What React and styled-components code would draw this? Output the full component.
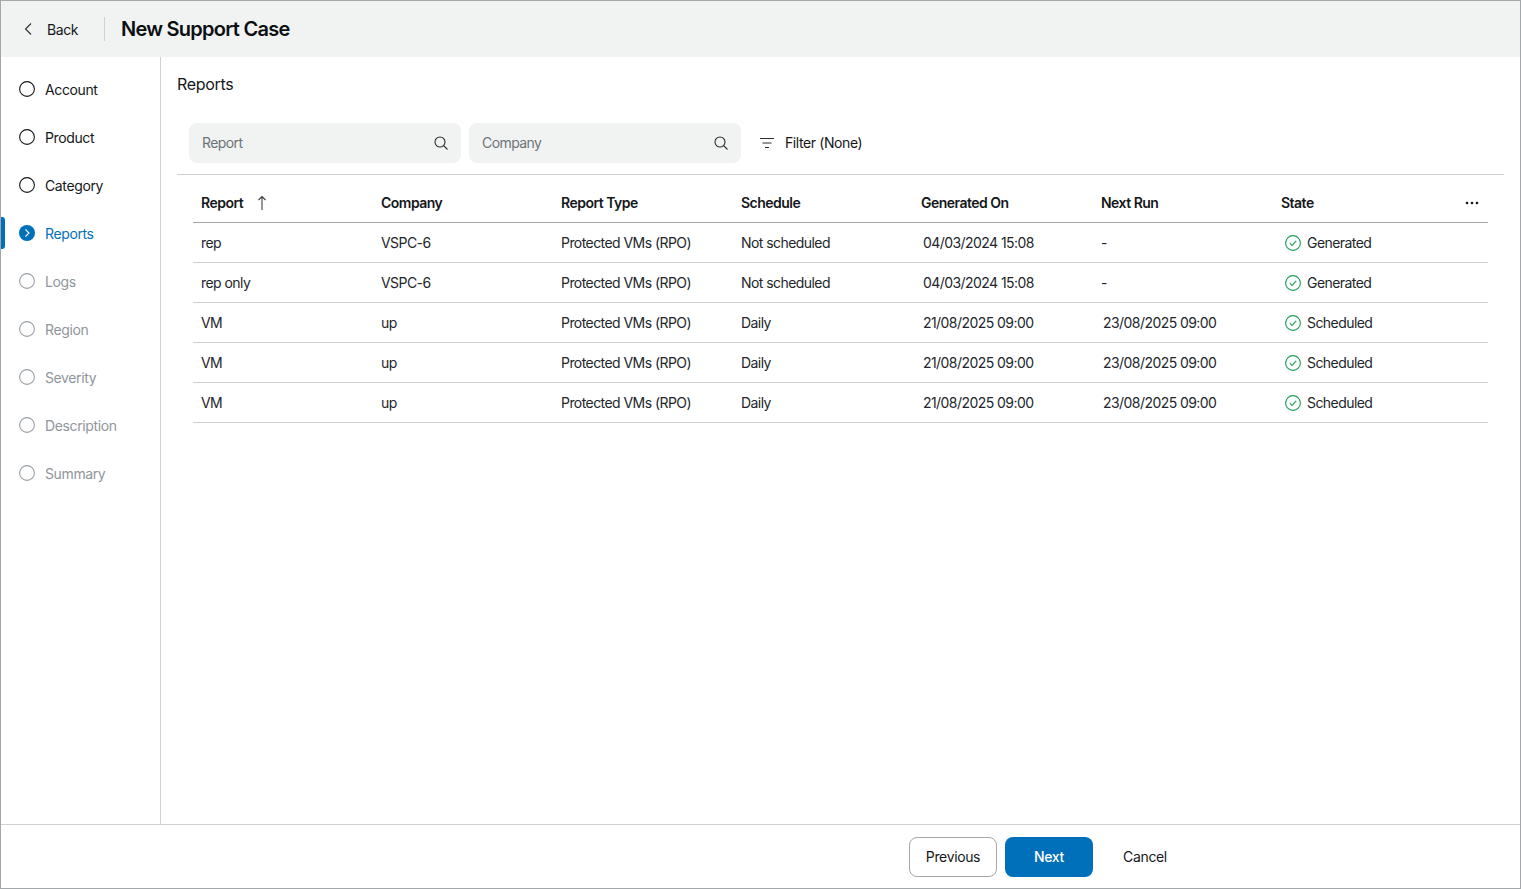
import React from "react";
import styled, { createGlobalStyle } from "styled-components";

const steps = [
  { label: "Account", state: "done" },
  { label: "Product", state: "done" },
  { label: "Category", state: "done" },
  { label: "Reports", state: "active" },
  { label: "Logs", state: "todo" },
  { label: "Region", state: "todo" },
  { label: "Severity", state: "todo" },
  { label: "Description", state: "todo" },
  { label: "Summary", state: "todo" },
];

const columns = ["Report", "Company", "Report Type", "Schedule", "Generated On", "Next Run", "State"];

const rows = [
  ["rep", "VSPC-6", "Protected VMs (RPO)", "Not scheduled", "04/03/2024 15:08", "-", "Generated"],
  ["rep only", "VSPC-6", "Protected VMs (RPO)", "Not scheduled", "04/03/2024 15:08", "-", "Generated"],
  ["VM", "up", "Protected VMs (RPO)", "Daily", "21/08/2025 09:00", "23/08/2025 09:00", "Scheduled"],
  ["VM", "up", "Protected VMs (RPO)", "Daily", "21/08/2025 09:00", "23/08/2025 09:00", "Scheduled"],
  ["VM", "up", "Protected VMs (RPO)", "Daily", "21/08/2025 09:00", "23/08/2025 09:00", "Scheduled"],
];

const SearchIcon = () => (
  <svg width="16" height="16" viewBox="0 0 16 16" fill="none" stroke="#2b2f33" strokeWidth="1.1">
    <circle cx="7" cy="7" r="5" />
    <path d="M10.7 10.7 14.5 14.5" />
  </svg>
);

function StepIcon({ state }) {
  if (state === "active") {
    return (
      <svg width="16" height="16" viewBox="0 0 16 16">
        <circle cx="8" cy="8" r="8" fill="#0070bb" />
        <path d="M6.500 4.500 10 8l-3.500 3.500" fill="none" stroke="#fff" strokeWidth="1.1" />
      </svg>
    );
  }
  return (
    <svg width="16" height="16" viewBox="0 0 16 16">
      <circle cx="8" cy="8" r="7.4" fill="none" stroke={state === "done" ? "#14171a" : "#9aa1a6"} strokeWidth="1.1" />
    </svg>
  );
}

function App() {
  return (
    <>
      <GlobalStyle />
      <Frame>
        <Header>
          <BackButton>
            <svg width="16" height="16" viewBox="0 0 16 16" fill="none" stroke="#2b2f33" strokeWidth="1.1">
              <path d="M11 2.500 5.500 8l5.500 5.500" />
            </svg>
            <span>Back</span>
          </BackButton>
          <Title>New Support Case</Title>
        </Header>
        <Body>
          <Sidebar>
            {steps.map((step) => (
              <Step key={step.label} $state={step.state}>
                <StepIcon state={step.state} />
                <span>{step.label}</span>
              </Step>
            ))}
          </Sidebar>
          <Content>
            <Heading>Reports</Heading>
            <Toolbar>
              <SearchBox>
                <span>Report</span>
                <SearchIcon />
              </SearchBox>
              <SearchBox>
                <span>Company</span>
                <SearchIcon />
              </SearchBox>
              <FilterButton>
                <svg width="16" height="16" viewBox="0 0 16 16" fill="none" stroke="#2b2f33" strokeWidth="1.1">
                  <path d="M1 3.500h14M3.500 8h9M6 12.500h4" />
                </svg>
                <span>Filter (None)</span>
              </FilterButton>
            </Toolbar>
            <Table>
              <thead>
                <tr>
                  {columns.map((col) => (
                    <HeadCell key={col}>
                      <HeadInner>
                        <span>{col}</span>
                        {col === "Report" && (
                          <SortArrow width="12" height="16" viewBox="0 0 12 16" fill="none" stroke="#3a3f44" strokeWidth="1.1">
                            <path d="M6 15V1.500M2.500 5 6 1.500 9.500 5" />
                          </SortArrow>
                        )}
                        {col === "State" && (
                          <MoreDots viewBox="0 0 14 4" width="14" height="4" fill="#14171a">
                            <circle cx="2" cy="2" r="1.300" />
                            <circle cx="7" cy="2" r="1.300" />
                            <circle cx="12" cy="2" r="1.300" />
                          </MoreDots>
                        )}
                      </HeadInner>
                    </HeadCell>
                  ))}
                </tr>
              </thead>
              <tbody>
                {rows.map((row, i) => (
                  <tr key={i}>
                    <Cell>{row[0]}</Cell>
                    <Cell>{row[1]}</Cell>
                    <Cell>{row[2]}</Cell>
                    <Cell>{row[3]}</Cell>
                    <Cell $inset>{row[4]}</Cell>
                    <Cell $inset={row[5] !== "-"}>{row[5]}</Cell>
                    <Cell $inset>
                      <StateLabel>
                        <CheckIcon width="16" height="16" viewBox="0 0 16 16" fill="none" stroke="#1a9e55" strokeWidth="1.1">
                          <circle cx="8" cy="8" r="7.4" />
                          <path d="M4.800 8.200 7.100 10.500 11.200 5.800" />
                        </CheckIcon>
                        <span>{row[6]}</span>
                      </StateLabel>
                    </Cell>
                  </tr>
                ))}
              </tbody>
            </Table>
          </Content>
        </Body>
        <Footer>
          <OutlineButton>Previous</OutlineButton>
          <PrimaryButton>Next</PrimaryButton>
          <TextButton>Cancel</TextButton>
        </Footer>
      </Frame>
    </>
  );
}

const GlobalStyle = createGlobalStyle`
  html, body {
    margin: 0;
    padding: 0;
    background: #fff;
  }
  body {
    font-family: Inter, "Liberation Sans", sans-serif;
    font-size: 14px;
    color: #14171a;
  }
  * {
    box-sizing: border-box;
  }
`;

const Frame = styled.div`
  width: 1521px;
  height: 889px;
  border: 1px solid #a3a7aa;
  display: flex;
  flex-direction: column;
  overflow: hidden;
`;

const Header = styled.header`
  height: 56px;
  flex: none;
  background: #f1f3f3;
  display: flex;
  align-items: center;
  padding-left: 19px;
`;

const BackButton = styled.div`
  width: 85px;
  height: 24px;
  display: flex;
  align-items: center;
  gap: 11px;
  border-right: 1px solid #cfd2d4;
  letter-spacing: -0.4px;
`;

const Title = styled.h1`
  margin: 0 0 0 16px;
  font-size: 20px;
  font-weight: 600;
  letter-spacing: -0.74px;
  color: #0c0f12;
`;

const Body = styled.div`
  flex: 1;
  display: flex;
  min-height: 0;
`;

const Sidebar = styled.nav`
  width: 160px;
  flex: none;
  padding-top: 8px;
  border-right: 1px solid #cfd2d4;
`;

const Step = styled.div`
  position: relative;
  height: 48px;
  display: flex;
  align-items: center;
  gap: 10px;
  padding-left: 18px;
  letter-spacing: -0.38px;
  color: ${(p) => (p.$state === "active" ? "#0070bb" : p.$state === "todo" ? "#8f969b" : "#14171a")};

  ${(p) =>
    p.$state === "active" &&
    `
    &::before {
      content: "";
      position: absolute;
      left: 0;
      top: 8px;
      width: 4px;
      height: 32px;
      background: #0070bb;
      border-radius: 0 3px 3px 0;
    }
  `}
`;

const Content = styled.main`
  flex: 1;
  min-width: 0;
  padding: 15px 16px 0;
`;

const Heading = styled.h2`
  margin: 0;
  height: 24px;
  line-height: 24px;
  font-size: 16px;
  font-weight: 400;
  letter-spacing: -0.3px;
`;

const Toolbar = styled.div`
  margin-top: 27px;
  height: 52px;
  padding: 0 0 12px 12px;
  display: flex;
  gap: 8px;
  border-bottom: 1px solid #cfd2d4;
`;

const SearchBox = styled.div`
  width: 272px;
  height: 40px;
  padding: 0 12px 0 13px;
  background: #f1f3f3;
  border-radius: 8px;
  display: flex;
  align-items: center;
  justify-content: space-between;
  color: #6c7378;
  letter-spacing: -0.58px;

  span {
    padding-bottom: 2px;
  }
`;

const FilterButton = styled.div`
  height: 40px;
  margin-left: 10px;
  display: flex;
  align-items: center;
  gap: 10px;
  letter-spacing: -0.4px;

  span {
    padding-bottom: 2px;
  }
`;

const Table = styled.table`
  margin: 8px 0 0 16px;
  width: 1295px;
  table-layout: fixed;
  border-collapse: collapse;
`;

const HeadCell = styled.th`
  width: 180px;
  height: 39px;
  padding: 0 8px;
  text-align: left;
  font-weight: 600;
  letter-spacing: -0.52px;
  border-bottom: 1px solid #a3a7aa;

  &:last-child {
    width: auto;
  }
`;

const HeadInner = styled.div`
  display: flex;
  align-items: center;
  gap: 13px;
`;

const SortArrow = styled.svg`
  margin-top: 2px;
`;

const MoreDots = styled.svg`
  margin-left: auto;
  margin-right: 1px;
  margin-top: 2px;
`;

const Cell = styled.td`
  height: 40px;
  padding: 0 8px 0 ${(p) => (p.$inset ? "10px" : "8px")};
  border-bottom: 1px solid #cfd2d4;
  color: #22262a;
  letter-spacing: -0.56px;
`;

const StateLabel = styled.div`
  display: flex;
  align-items: center;
  gap: 6px;
  padding-left: 2px;
`;

const CheckIcon = styled.svg`
  margin-top: 2px;
`;

const Footer = styled.footer`
  height: 64px;
  flex: none;
  border-top: 1px solid #cfd2d4;
  display: flex;
  align-items: center;
  padding-left: 908px;
  gap: 8px;
`;

const OutlineButton = styled.button`
  width: 88px;
  height: 40px;
  border: 1px solid #a3a7aa;
  border-radius: 8px;
  background: #fff;
  font: inherit;
  letter-spacing: -0.36px;
  color: #14171a;
`;

const PrimaryButton = styled.button`
  width: 88px;
  height: 40px;
  border: none;
  border-radius: 8px;
  background: #0070bb;
  font: inherit;
  font-weight: 500;
  letter-spacing: -0.36px;
  color: #fff;
`;

const TextButton = styled.button`
  width: 88px;
  height: 40px;
  border: none;
  background: none;
  font: inherit;
  letter-spacing: -0.36px;
  color: #14171a;
`;

export default App;
